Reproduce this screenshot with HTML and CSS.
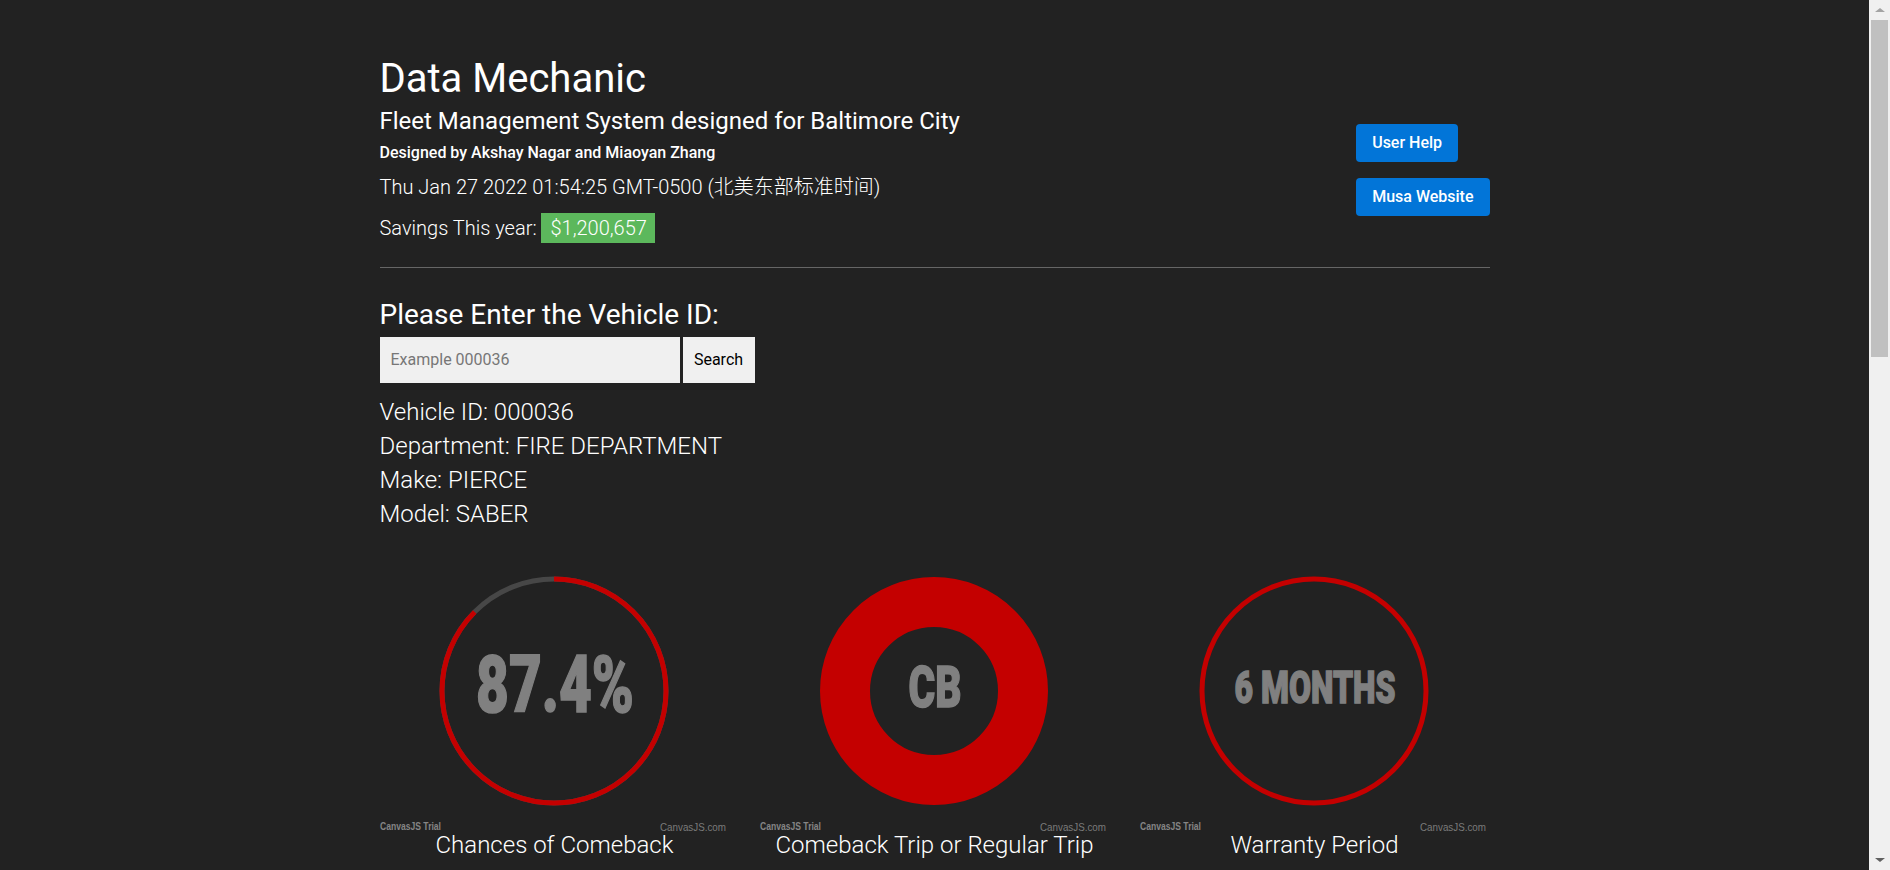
FILE: index.html
```html
<!DOCTYPE html>
<html lang="en">
<head>
<meta charset="utf-8">
<title>Data Mechanic</title>
<link rel="stylesheet" href="styles.css">
</head>
<body>
<div class="container">
  <header class="top">
    <div class="intro">
      <h1 class="title">Data Mechanic</h1>
      <h2 class="subtitle">Fleet Management System designed for Baltimore City</h2>
      <p class="credits">Designed by Akshay Nagar and Miaoyan Zhang</p>
      <p class="lead date">Thu Jan 27 2022 01:54:25 GMT-0500 (北美东部标准时间)</p>
      <p class="lead savings">Savings This year: <span class="badge">$1,200,657</span></p>
    </div>
    <nav class="links">
      <a class="btn" href="#help">User Help</a>
      <a class="btn" href="#musa">Musa Website</a>
    </nav>
  </header>

  <hr class="divider">

  <section class="search">
    <h3 class="search-title">Please Enter the Vehicle ID:</h3>
    <form class="search-form">
      <input class="search-input" type="text" placeholder="Example 000036">
      <button class="search-btn" type="button">Search</button>
    </form>
    <div class="vehicle-info">
      <p>Vehicle ID: 000036</p>
      <p>Department: FIRE DEPARTMENT</p>
      <p>Make: PIERCE</p>
      <p>Model: SABER</p>
    </div>
  </section>

  <section class="gauges">
    <div class="gauge">
      <svg class="gauge-chart" width="350" height="268" viewBox="0 0 350 268">
        <circle class="ring-track" cx="174" cy="131" r="112"/>
        <circle class="ring-value" cx="174" cy="131" r="112" stroke-dasharray="615 1000" transform="rotate(-90 174 131)"/>
        <text class="gauge-value big" x="175" y="152" textLength="158" lengthAdjust="spacingAndGlyphs">87.4%</text>
        <text class="trial" x="0" y="270" textLength="61" lengthAdjust="spacingAndGlyphs">CanvasJS Trial</text>
        <text class="brand" x="346" y="271" textLength="66" lengthAdjust="spacingAndGlyphs">CanvasJS.com</text>
      </svg>
      <p class="gauge-label">Chances of Comeback</p>
    </div>
    <div class="gauge">
      <svg class="gauge-chart" width="350" height="268" viewBox="0 0 350 268">
        <circle class="ring-thick" cx="174" cy="131" r="89"/>
        <text class="gauge-value mid" x="175" y="147" textLength="53" lengthAdjust="spacingAndGlyphs">CB</text>
        <text class="trial" x="0" y="270" textLength="61" lengthAdjust="spacingAndGlyphs">CanvasJS Trial</text>
        <text class="brand" x="346" y="271" textLength="66" lengthAdjust="spacingAndGlyphs">CanvasJS.com</text>
      </svg>
      <p class="gauge-label">Comeback Trip or Regular Trip</p>
    </div>
    <div class="gauge">
      <svg class="gauge-chart" width="350" height="268" viewBox="0 0 350 268">
        <circle class="ring-full" cx="174" cy="131" r="112"/>
        <text class="gauge-value small" x="175" y="143" textLength="161" lengthAdjust="spacingAndGlyphs">6 MONTHS</text>
        <text class="trial" x="0" y="270" textLength="61" lengthAdjust="spacingAndGlyphs">CanvasJS Trial</text>
        <text class="brand" x="346" y="271" textLength="66" lengthAdjust="spacingAndGlyphs">CanvasJS.com</text>
      </svg>
      <p class="gauge-label">Warranty Period</p>
    </div>
  </section>

  <section class="history"></section>
</div>

<div class="scrollbar" aria-hidden="true">
  <div class="sb-btn"><span class="sb-arrow-up"></span></div>
  <div class="sb-thumb"></div>
  <div class="sb-track"></div>
  <div class="sb-btn"><span class="sb-arrow-down"></span></div>
</div>
</body>
</html>
```

FILE: styles.css
```css
html {
  background: #222222;
}

body {
  margin: 0;
  padding-right: 21px;
  background: #222222;
  color: #ffffff;
  font-family: Roboto, "Noto Sans CJK SC", sans-serif;
}

.container {
  max-width: 1110px;
  margin: 0 auto;
  padding-top: 55px;
}

.top {
  display: flex;
  justify-content: space-between;
  align-items: flex-start;
}

.title {
  margin: 0 0 4px;
  font-size: 40px;
  line-height: 48px;
  font-weight: 400;
}

.subtitle {
  margin: 0 0 8px;
  font-size: 24px;
  line-height: 29px;
  font-weight: 400;
}

.credits {
  margin: 0;
  font-size: 16px;
  line-height: 17px;
  font-weight: 500;
}

.lead {
  font-size: 20px;
  line-height: 30px;
  font-weight: 300;
}

.date {
  margin: 11px 0 0;
}

.savings {
  margin: 11px 0 0;
}

.badge {
  background: #5cb85c;
  padding: 3px 8px 3px 9px;
}

.links {
  display: flex;
  flex-direction: column;
  align-items: flex-start;
  gap: 16px;
  margin-top: 69px;
}

.btn {
  display: block;
  height: 38px;
  line-height: 38px;
  padding: 0 16px;
  background: #0275d8;
  color: #ffffff;
  border-radius: 4px;
  font-size: 16px;
  font-weight: 500;
  text-decoration: none;
}

.divider {
  margin: 24px 0 0;
  border: 0;
  border-top: 1px solid #666666;
  height: 0;
}

.search-title {
  margin: 30px 0 0;
  font-size: 28px;
  line-height: 33.6px;
  font-weight: 400;
}

.search-form {
  display: flex;
  gap: 3px;
  margin: 5px 0 0;
}

.search-input {
  width: 300px;
  height: 46px;
  box-sizing: border-box;
  border: 0;
  padding: 0 11px;
  background: #f0f0f0;
  color: #000000;
  font-family: Roboto, sans-serif;
  font-size: 16px;
  outline: none;
}

.search-input::placeholder {
  color: #777777;
}

.search-btn {
  width: 72px;
  height: 46px;
  border: 0;
  padding: 0;
  background: #f0f0f0;
  color: #000000;
  font-family: Roboto, sans-serif;
  font-size: 16px;
}

.vehicle-info {
  margin-top: 12px;
}

.vehicle-info p {
  margin: 0;
  font-size: 24px;
  line-height: 34px;
  font-weight: 300;
}

.gauges {
  display: grid;
  grid-template-columns: repeat(3, 1fr);
  column-gap: 30px;
  margin-top: 29px;
}

.gauge {
  display: flex;
  flex-direction: column;
}

.gauge-chart {
  display: block;
  overflow: visible;
}

.ring-track {
  fill: none;
  stroke: #474747;
  stroke-width: 5;
}

.ring-value,
.ring-full {
  fill: none;
  stroke: #c40000;
  stroke-width: 5;
}

.ring-thick {
  fill: none;
  stroke: #c40000;
  stroke-width: 50;
}

.gauge-value {
  fill: #808080;
  stroke: #808080;
  stroke-width: 1.5;
  font-family: Roboto, sans-serif;
  font-weight: 900;
  text-anchor: middle;
}

.gauge-value.big {
  font-size: 80px;
}

.gauge-value.mid {
  font-size: 58px;
}

.gauge-value.small {
  font-size: 45px;
}

.trial {
  fill: #858585;
  font-family: "Liberation Sans", sans-serif;
  font-size: 10px;
  font-weight: 700;
}

.brand {
  fill: #7a7a7a;
  font-family: "Liberation Sans", sans-serif;
  font-size: 11px;
  text-anchor: end;
}

.gauge-label {
  margin: 0;
  text-align: center;
  font-size: 24px;
  line-height: 34px;
  font-weight: 300;
}

.history {
  height: 1280px;
}

.scrollbar {
  position: fixed;
  top: 0;
  right: 0;
  bottom: 0;
  width: 21px;
  background: #f0f0f0;
  display: flex;
  flex-direction: column;
}

.sb-btn {
  height: 20px;
  display: flex;
  align-items: center;
  justify-content: center;
}

.sb-arrow-up {
  width: 0;
  height: 0;
  border-left: 5px solid transparent;
  border-right: 5px solid transparent;
  border-bottom: 4px solid #a3a3a3;
}

.sb-arrow-down {
  width: 0;
  height: 0;
  border-left: 5px solid transparent;
  border-right: 5px solid transparent;
  border-top: 4px solid #606060;
}

.sb-thumb {
  height: 337px;
  margin: 0 2px;
  background: #c0c0c0;
}

.sb-track {
  flex: 1;
}
```
